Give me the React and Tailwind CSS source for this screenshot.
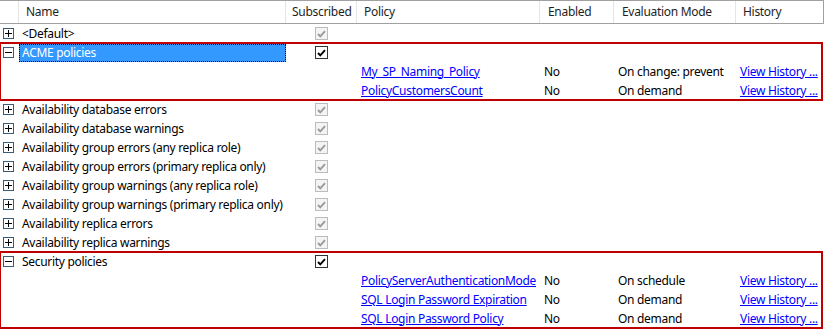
import React from "react";

const groups = [
  { name: "<Default>", subscribed: "disabled" },
  {
    name: "ACME policies",
    subscribed: "checked",
    open: true,
    selected: true,
    policies: [
      { name: "My_SP_Naming_Policy", enabled: "No", mode: "On change: prevent" },
      { name: "PolicyCustomersCount", enabled: "No", mode: "On demand" },
    ],
  },
  { name: "Availability database errors", subscribed: "disabled" },
  { name: "Availability database warnings", subscribed: "disabled" },
  { name: "Availability group errors (any replica role)", subscribed: "disabled" },
  { name: "Availability group errors (primary replica only)", subscribed: "disabled" },
  { name: "Availability group warnings (any replica role)", subscribed: "disabled" },
  { name: "Availability group warnings (primary replica only)", subscribed: "disabled" },
  { name: "Availability replica errors", subscribed: "disabled" },
  { name: "Availability replica warnings", subscribed: "disabled" },
  {
    name: "Security policies",
    subscribed: "checked",
    open: true,
    policies: [
      { name: "PolicyServerAuthenticationMode", enabled: "No", mode: "On schedule" },
      { name: "SQL Login Password Expiration", enabled: "No", mode: "On demand" },
      { name: "SQL Login Password Policy", enabled: "No", mode: "On demand" },
    ],
  },
];

const Expander = ({ open }) => (
  <div className="relative w-[11px] h-[11px] border border-[#3c5a78] bg-white">
    <div className="absolute left-[1px] right-[1px] top-[4px] h-px bg-black" />
    {!open && <div className="absolute top-[1px] bottom-[1px] left-[4px] w-px bg-black" />}
  </div>
);

const Check = ({ state }) => {
  const off = state === "disabled";
  return (
    <div
      className={
        "w-[13px] h-[13px] border flex items-center justify-center " +
        (off ? "border-[#bcbcbc] bg-[#f4f4f4]" : "border-[#333333] bg-white")
      }
    >
      <svg width="9" height="8" viewBox="0 0 9 8">
        <path
          d="M1 4 L3.3 6.4 L8 1.2"
          fill="none"
          stroke={off ? "#9a9a9a" : "#000"}
          strokeWidth="1.9"
        />
      </svg>
    </div>
  );
};

const cols = "grid grid-cols-[19px_267px_71px_183px_74px_122px_87px] whitespace-nowrap";

const GroupRow = ({ g }) => (
  <div className={cols + " h-[19px] items-center"}>
    <div className="pl-[3px] flex items-center">
      <Expander open={g.open} />
    </div>
    <div className="h-full flex items-center">
      <span
        className={
          "h-[18px] flex items-center w-full " +
          (g.selected ? "bg-[#3399ff] text-white border border-dotted border-black pl-[2px]" : "pl-[3px]")
        }
      >
        {g.name}
      </span>
    </div>
    <div className="flex justify-center">
      <Check state={g.subscribed} />
    </div>
    <div />
    <div />
    <div />
    <div />
  </div>
);

const PolicyRow = ({ p }) => (
  <div className={cols + " h-[19px] items-center"}>
    <div />
    <div />
    <div />
    <a className="pl-[4px] text-[#0000ff] underline">{p.name}</a>
    <div className="pl-[4px]">{p.enabled}</div>
    <div className="pl-[4px]">{p.mode}</div>
    <a className="pl-[4px] text-[#0000ff] underline">View History ...</a>
  </div>
);

export default function App() {
  return (
    <div
      className="w-[825px] h-[336px] bg-white text-[12px] tracking-[-0.3px] text-black overflow-hidden"
      style={{ fontFamily: '"Noto Sans", "Open Sans", sans-serif' }}
    >
      <div className="w-[824px] border-t border-r border-[#a0a0a0]">
        <div className={cols + " h-[23px] items-center border-b border-[#a0a0a0] text-[#1e1e1e]"}>
          <div className="h-full border-r border-[#e5e5e5]" />
          <div className="h-full pl-[7px] flex items-center border-r border-[#e5e5e5]">Name</div>
          <div className="h-full pl-[6px] flex items-center border-r border-[#e5e5e5]">Subscribed</div>
          <div className="h-full pl-[7px] flex items-center border-r border-[#e5e5e5]">Policy</div>
          <div className="h-full pl-[8px] flex items-center border-r border-[#e5e5e5]">Enabled</div>
          <div className="h-full pl-[8px] flex items-center border-r border-[#e5e5e5]">Evaluation Mode</div>
          <div className="h-full pl-[7px] flex items-center">History</div>
        </div>
      </div>
      <div>
        {groups.map((g) =>
          g.open ? (
            <div key={g.name} className="outline-2 outline-[#c00000] -outline-offset-1 w-[822px]">
              <GroupRow g={g} />
              {g.policies.map((p) => (
                <PolicyRow key={p.name} p={p} />
              ))}
            </div>
          ) : (
            <GroupRow key={g.name} g={g} />
          )
        )}
      </div>
    </div>
  );
}
